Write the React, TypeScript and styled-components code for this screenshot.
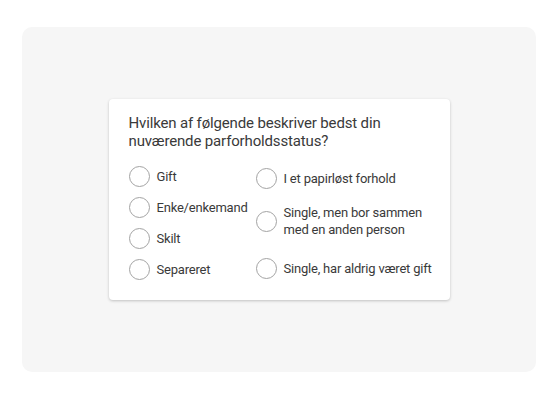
import React from 'react';
import styled, { createGlobalStyle } from 'styled-components';

const GlobalStyle = createGlobalStyle`
  body {
    margin: 0;
    background: #ffffff;
    font-family: 'Roboto', 'Open Sans', sans-serif;
  }
`;

const Stage = styled.div`
  padding: 27px 21px 28px 22px;
  width: 557px;
  box-sizing: border-box;
`;

const Panel = styled.div`
  align-items: center;
  background-color: #f6f6f6;
  border-radius: 10px;
  display: flex;
  height: 345px;
  justify-content: center;
`;

const Card = styled.div`
  background-color: #ffffff;
  border-radius: 4px;
  box-shadow: 0 1px 3px rgba(0, 0, 0, 0.22);
  box-sizing: border-box;
  padding: 15px 14px 20px 20px;
  width: 341px;
`;

const Question = styled.div`
  color: #3a3a3a;
  font-size: 15px;
  letter-spacing: -0.15px;
  line-height: 18px;
  margin-bottom: 16px;
`;

const Options = styled.div`
  display: grid;
  grid-template-columns: 127px 1fr;
`;

const Column = styled.div<{ $offsetTop?: number }>`
  display: flex;
  flex-direction: column;
  gap: ${({ $offsetTop }) => ($offsetTop ? '15px' : '10px')};
  padding-top: ${({ $offsetTop }) => $offsetTop || 0}px;
  padding-bottom: ${({ $offsetTop }) => ($offsetTop ? 1 : 0)}px;
`;

const Option = styled.label<{ $pushDown?: boolean }>`
  align-items: center;
  color: #3a3a3a;
  cursor: pointer;
  display: flex;
  font-size: 13px;
  gap: 7px;
  letter-spacing: -0.2px;
  line-height: 17px;
  margin-top: ${({ $pushDown }) => ($pushDown ? 'auto' : '0')};
`;

const Label = styled.span<{ $wrap?: boolean }>`
  white-space: ${({ $wrap }) => ($wrap ? 'normal' : 'nowrap')};
`;

const Radio = styled.span`
  background: #ffffff;
  border: 1px solid #a3a3a3;
  border-radius: 50%;
  box-sizing: border-box;
  flex: 0 0 21px;
  height: 21px;
  width: 21px;
`;

const left = ['Gift', 'Enke/enkemand', 'Skilt', 'Separeret'];
const right = ['I et papirløst forhold', 'Single, men bor sammen med en anden person', 'Single, har aldrig været gift'];

export default function App() {
  return (
    <>
      <GlobalStyle />
      <Stage>
        <Panel>
          <Card>
            <Question>
              Hvilken af følgende beskriver bedst din
              <br />
              nuværende parforholdsstatus?
            </Question>
            <Options>
              <Column>
                {left.map((label) => (
                  <Option key={label}>
                    <Radio />
                    <Label>{label}</Label>
                  </Option>
                ))}
              </Column>
              <Column $offsetTop={2}>
                {right.map((label, i) => (
                  <Option key={label} $pushDown={i === right.length - 1}>
                    <Radio />
                    <Label $wrap={i === 1}>{label}</Label>
                  </Option>
                ))}
              </Column>
            </Options>
          </Card>
        </Panel>
      </Stage>
    </>
  );
}
